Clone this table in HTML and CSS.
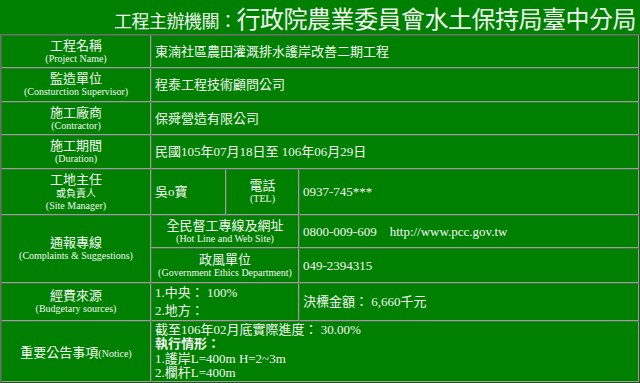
FILE: index.html
```html
<!DOCTYPE html>
<html lang="zh-Hant">
<head>
<meta charset="utf-8">
<title>工程告示牌</title>
<link rel="stylesheet" href="styles.css">
</head>
<body>
<div class="title"><span class="t-small">工程主辦機關：</span><span class="t-big">行政院農業委員會水土保持局臺中分局</span></div>
<table class="board">
  <colgroup>
    <col class="c1"><col class="c2"><col class="c3"><col>
  </colgroup>
  <tr class="r1">
    <td class="lab"><div class="zh">工程名稱</div><div class="en">(Project Name)</div></td>
    <td class="val" colspan="3">東湳社區農田灌溉排水護岸改善二期工程</td>
  </tr>
  <tr class="r2">
    <td class="lab"><div class="zh">監造單位</div><div class="en">(Consturction Supervisor)</div></td>
    <td class="val" colspan="3">程泰工程技術顧問公司</td>
  </tr>
  <tr class="r3">
    <td class="lab"><div class="zh">施工廠商</div><div class="en">(Contractor)</div></td>
    <td class="val" colspan="3">保舜營造有限公司</td>
  </tr>
  <tr class="r4">
    <td class="lab"><div class="zh">施工期間</div><div class="en">(Duration)</div></td>
    <td class="val" colspan="3">民國105年07月18日至 106年06月29日</td>
  </tr>
  <tr class="r5">
    <td class="lab"><div class="zh">工地主任</div><div class="zh-s">或負責人</div><div class="en">(Site Manager)</div></td>
    <td class="val">吳o寶</td>
    <td class="lab"><div class="zh">電話</div><div class="en">(TEL)</div></td>
    <td class="val">0937-745***</td>
  </tr>
  <tr class="r6">
    <td class="lab" rowspan="2"><div class="zh">通報專線</div><div class="en">(Complaints &amp; Suggestions)</div></td>
    <td class="lab" colspan="2"><div class="zh">全民督工專線及網址</div><div class="en">(Hot Line and Web Site)</div></td>
    <td class="val">0800-009-609&nbsp;&nbsp;&nbsp;&nbsp;http://www.pcc.gov.tw</td>
  </tr>
  <tr class="r7">
    <td class="lab" colspan="2"><div class="zh">政風單位</div><div class="en">(Government Ethics Department)</div></td>
    <td class="val">049-2394315</td>
  </tr>
  <tr class="r8">
    <td class="lab"><div class="zh">經費來源</div><div class="en">(Budgetary sources)</div></td>
    <td class="val lines18" colspan="2"><div>1.中央： 100%</div><div>2.地方：</div></td>
    <td class="val">決標金額： 6,660千元</td>
  </tr>
  <tr class="r9">
    <td class="lab"><span class="zh-in">重要公告事項</span><span class="en-in">(Notice)</span></td>
    <td class="val lines14" colspan="3">
      <div>截至106年02月底實際進度： 30.00%</div>
      <div class="bold">執行情形：</div>
      <div>1.護岸L=400m H=2~3m</div>
      <div>2.欄杆L=400m</div>
    </td>
  </tr>
</table>
</body>
</html>
```
FILE: styles.css
```css
html, body {
  margin: 0;
  padding: 0;
}
body {
  background: #008000;
  color: #f2f7f2;
  font-family: "Liberation Serif", "Noto Sans CJK TC", serif;
  width: 640px;
  height: 383px;
  overflow: hidden;
}
.title {
  height: 34px;
  text-align: right;
  padding-right: 4px;
  white-space: nowrap;
  font-family: "Noto Sans CJK TC", sans-serif;
  line-height: 35px;
  color: #eef5ee;
}
.t-small {
  font-size: 18px;
  letter-spacing: -0.5px;
}
.t-big {
  font-size: 24px;
  letter-spacing: -0.5px;
}
.board {
  width: 640px;
  table-layout: fixed;
  border-collapse: separate;
  border-spacing: 0;
  border-top: 1px solid #5d7a5d;
  border-left: 1px solid #5d7a5d;
  border-right: 1px solid #2e4a2e;
  border-bottom: 2px solid #2e4a2e;
}
.c1 { width: 150px; }
.c2 { width: 75px; }
.c3 { width: 73px; }
.board td {
  border-top: 1px solid #4a6e4a;
  border-left: 1px solid #4a6e4a;
  border-right: 1px solid #8aab8a;
  border-bottom: 1px solid #8aab8a;
  padding: 0 3px;
  vertical-align: middle;
}
.lab {
  text-align: center;
}
.val {
  text-align: left;
  font-size: 13px;
  line-height: 16px;
  white-space: nowrap;
}
.zh {
  font-size: 13px;
  line-height: 14px;
}
.zh-s {
  font-size: 10px;
  line-height: 13px;
}
.en {
  font-size: 10px;
  line-height: 12px;
  white-space: nowrap;
}
.zh-in {
  font-size: 13px;
}
.en-in {
  font-size: 10px;
}
.lines18 {
  line-height: 18px;
}
.lines14 {
  line-height: 14.5px;
}
.bold {
  font-weight: bold;
}
.r1 { height: 33px; }
.r2 { height: 34px; }
.r3 { height: 33px; }
.r4 { height: 34px; }
.r5 { height: 46px; }
.r6 { height: 33px; }
.r7 { height: 35px; }
.r8 { height: 38px; }
.r9 { height: 61px; }
```
